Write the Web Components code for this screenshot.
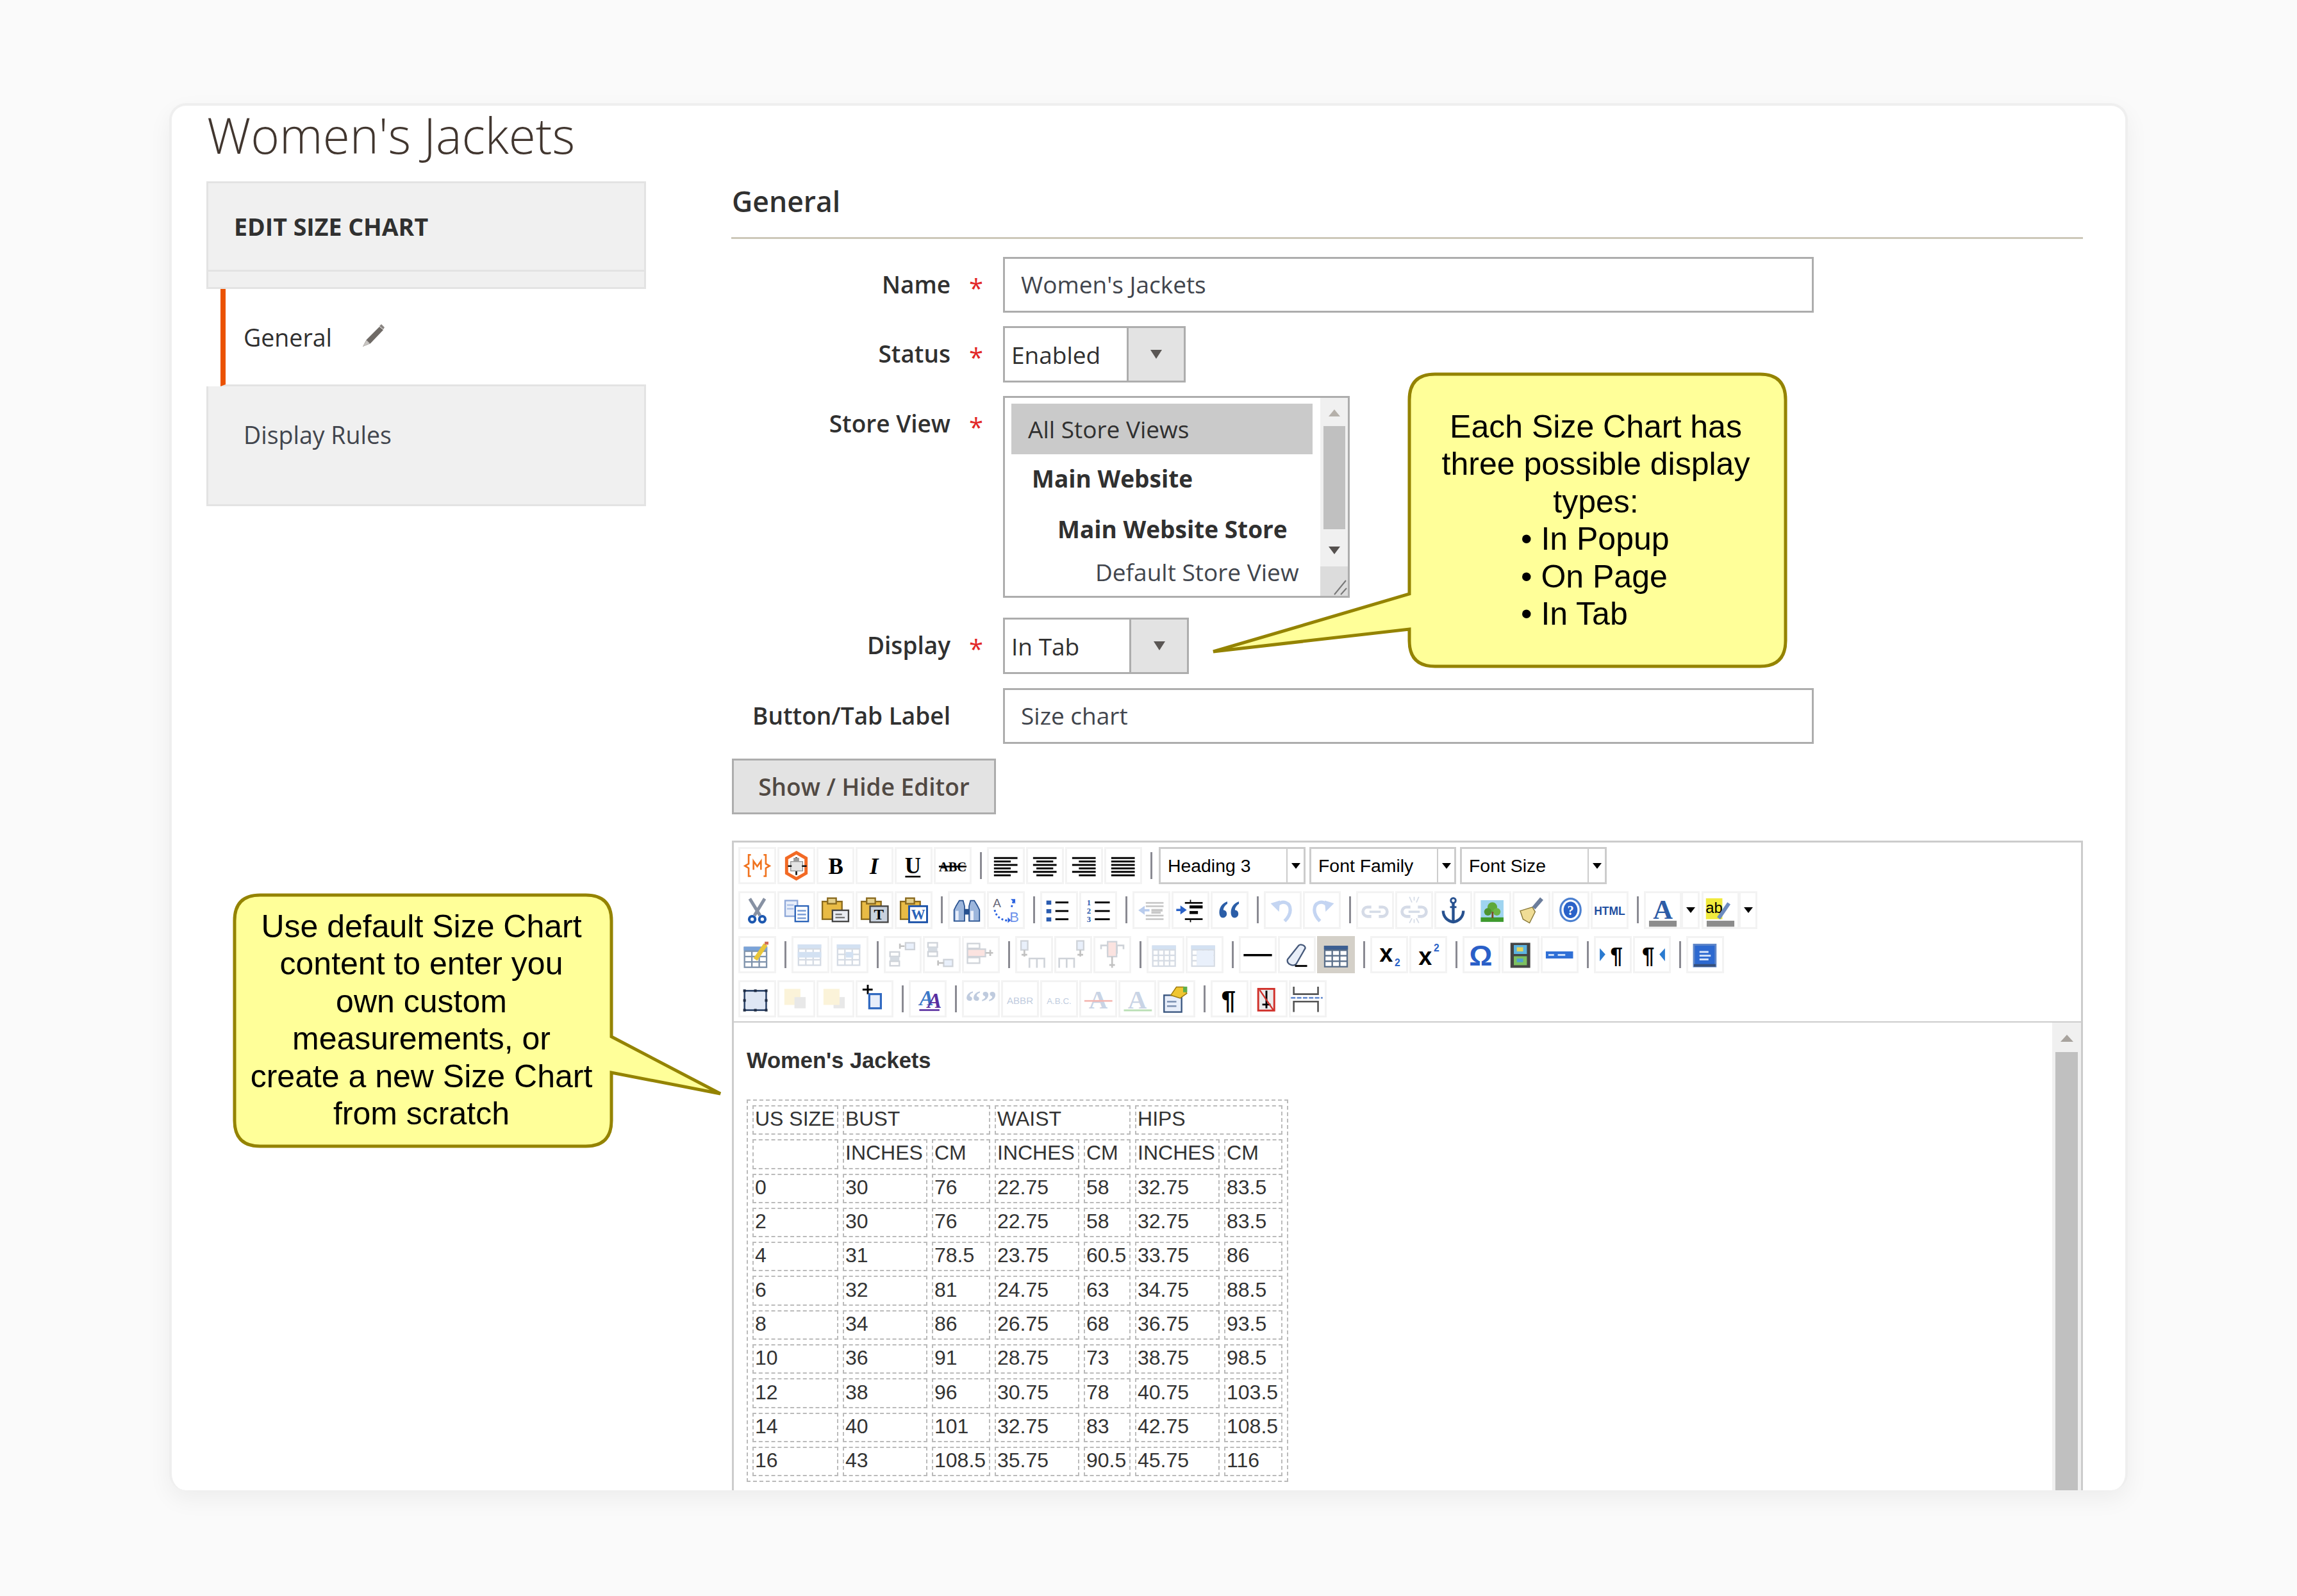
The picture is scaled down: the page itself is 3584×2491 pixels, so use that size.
<!DOCTYPE html>
<html lang="en">
<head>
<meta charset="utf-8">
<title>Women's Jackets</title>
<style>
  html, body { margin: 0; height: 2491px; overflow: hidden; background: #fafafa; }
  body { font-family: "Open Sans", sans-serif; color: #303030; }
</style>
</head>
<body>
<size-chart-card>
  <h1-title slot="title">Women's Jackets</h1-title>
  <side-nav slot="side"></side-nav>
  <form-section slot="main" title="General">
    <form-row label="Name" required><text-field>Women's Jackets</text-field></form-row>
    <form-row label="Status" required style="--gap:21px"><drop-select width="285" split="193">Enabled</drop-select></form-row>
    <form-row label="Store View" required style="--gap:21px"><store-list></store-list></form-row>
    <form-row label="Display" required style="--gap:31px"><drop-select width="290" split="197">In Tab</drop-select></form-row>
    <form-row label="Button/Tab Label" style="--gap:22px"><text-field>Size chart</text-field></form-row>
    <plain-button>Show / Hide Editor</plain-button>
    <wysiwyg-editor></wysiwyg-editor>
  </form-section>
  <call-out x="2199" y="584" w="587" h="456" side="left" t1="927" t2="982" tx="1893" ty="1017" pad="53">Each Size Chart has<br>three possible display<br>types:<div style="text-align:left;padding-left:174px">• In Popup<br>• On Page<br>• In Tab</div></call-out>
  <call-out x="366" y="1397" w="588" h="392" side="right" t1="1618" t2="1674" tx="1124" ty="1707" pad="20">Use default Size Chart<br>content to enter you<br>own custom<br>measurements, or<br>create a new Size Chart<br>from scratch</call-out>
</size-chart-card>

<script>
(function (customElements) {
  // small svg helpers for the 20x20 toolbar icons
  const r = (x, y, w, h, f, s, sw) => `<rect x="${x}" y="${y}" width="${w}" height="${h}" fill="${f}"${s ? ` stroke="${s}" stroke-width="${sw || 0.8}"` : ''}/>`;
  const p = (d, s, sw, f) => `<path d="${d}" fill="${f || 'none'}"${s ? ` stroke="${s}" stroke-width="${sw || 1}"` : ''}/>`;
  const t = (txt, x, y, size, f, extra) => `<text x="${x}" y="${y}" font-size="${size}" fill="${f}" text-anchor="middle" ${extra || ''}>${txt}</text>`;
  const serif = 'font-family="Liberation Serif" font-weight="700"';
  const sans = 'font-family="Liberation Sans"';

  const bars = (spec) => spec.map(([x, w], i) => r(x, 5.4 + i * 1.85, w, 1, '#000')).join('');
  const clipboard = r(3, 5.5, 10.5, 9.5, '#e9bb45', '#8a6a1f') + r(5.8, 3.7, 4.6, 3, '#e3cf8a', '#8a6a1f');
  const tgrid = (x, y, w, h, cols, rows, frame, head) => {
    let out = r(x, y, w, h, frame) + r(x, y, w, 2, head);
    const cw = (w - 0.8) / cols, ch = (h - 2.8) / rows;
    for (let c = 0; c < cols; c++) for (let o = 0; o < rows; o++) out += r(x + 0.8 + c * cw, y + 2.8 + o * ch, cw - 0.8, ch - 0.8, '#fff');
    return out;
  };
  const chain = p('M8 8.5H6a2.5 2.5 0 0 0 0 5H8M12 8.5h2a2.5 2.5 0 0 1 0 5H12', '#7f93b5', 1.6) + p('M7 11h6', '#7f93b5', 1.2);
  const aLetter = (f) => t('A', 10, 15, 14, f, serif);

  const ICONS = {
    vars: p('M6.6 4.2H5.4V9L3.4 10.1 5.4 11.3V15.6H6.6M13.4 4.2H14.6V9L16.6 10.1 14.6 11.3V15.6H13.4', '#f0731f', 0.9) + p('M8 12.2V7.6L10 10.4 12 7.6V12.2', '#f0731f', 0.9),
    widget: p('M10 3 15.2 6V14L10 17 4.8 14V6Z', '#f26a25', 1.7) + r(7, 7.8, 6.4, 5, '#e4e4e4', '#888', 0.4) + p('M10 5.5V7.5M10 13V15M5.5 10.2H7.5M13 10.2H15.5', '#111', 0.9) + r(8.5, 5.8, 3, 2, '#999'),
    bold: t('B', 10.2, 14.4, 12, '#000', serif),
    italic: t('I', 9.8, 14.4, 12, '#000', serif + ' font-style="italic"'),
    underline: t('U', 9.6, 14.2, 12, '#000', serif) + r(5.5, 15.4, 8.2, 0.9, '#000'),
    strike: t('ABC', 10, 13.2, 7, '#000', serif) + r(2.6, 10, 14.8, 0.9, '#000'),
    left: bars([[3.6, 12.6], [3.6, 9], [3.6, 12.6], [3.6, 9], [3.6, 12.6], [3.6, 9]]),
    center: bars([[3.6, 12.6], [5.4, 9], [3.6, 12.6], [5.4, 9], [3.6, 12.6], [5.4, 9]]),
    right: bars([[3.6, 12.6], [7.2, 9], [3.6, 12.6], [7.2, 9], [3.6, 12.6], [7.2, 9]]),
    justify: bars([[3.6, 12.6], [3.6, 12.6], [3.6, 12.6], [3.6, 12.6], [3.6, 12.6], [3.6, 12.6]]),
    cut: p('M6 4 11.5 13M14 4 8.5 13', '#8791a3', 1.7) + `<circle cx="7.3" cy="15" r="1.6" fill="none" stroke="#1d58b0" stroke-width="1.4"/><circle cx="12.7" cy="15" r="1.6" fill="none" stroke="#1d58b0" stroke-width="1.4"/>`,
    copy: r(4, 5, 6.6, 8.4, '#e8eefa', '#8fa8d8') + r(9.4, 7.9, 7, 8.3, '#fff', '#2a62b8') + r(10.6, 10, 4.6, 0.9, '#7ea0d8') + r(10.6, 12, 4.6, 0.9, '#7ea0d8') + r(10.6, 14, 4.6, 0.9, '#7ea0d8') + r(5, 7, 3.6, 0.8, '#a9bfe6') + r(5, 9, 3.6, 0.8, '#a9bfe6'),
    paste: clipboard + r(8.4, 10.2, 8.6, 6, '#e9ecf2', '#444') + r(10, 12, 3.5, 0.8, '#777') + r(10, 13.7, 5, 0.8, '#777'),
    pastetext: clipboard + r(7.6, 8, 9.6, 8.6, '#c9d2de', '#444') + t('T', 12.3, 15, 8, '#000', serif),
    pasteword: clipboard + r(7.6, 8, 9.6, 8.6, '#fff', '#1b52a8', 1) + t('W', 12.4, 15, 7.6, '#2a62b8', serif),
    find: p('M4.2 8 6 5H8L8.8 8V16H3.2V10ZM15.8 8 14 5H12L11.2 8V16H16.8V10Z', '#27518f', 0.6, '#9cb6dc') + r(8.6, 9.5, 2.8, 3, '#27518f') + r(4, 10.5, 1.6, 5, '#e8eefa') + r(12, 10.5, 1.6, 5, '#e8eefa'),
    replace: t('A', 5.2, 8.6, 6.5, '#667', sans) + t('B', 14.5, 16.4, 7.5, '#6c92ea', sans) + p('M14 5.5 13 8.5M4 10c.5 3 3 5.5 7 5.7', '#2a62e0', 1, 'none').replace('<path', '<path stroke-dasharray="1 1.1"') + p('M12.6 4.2h2.4v2.6Z', null, 0, '#2a62e0') + p('M11 14v3l1.7-1.5Z', null, 0, '#2a62e0'),
    bullist: [6, 10.6, 15].map(y => r(3.2, y - 1, 2.6, 2.2, '#2a5cb0') + r(8, y - 0.5, 7, 1, '#000')).join(''),
    numlist: [6, 10.6, 15].map((y, i) => t(String(i + 1), 5, y + 1.4, 4.4, '#2a5cb0', serif) + r(8.2, y - 0.5, 8, 1, '#000')).join(''),
    outdent: [5.8, 7.6, 12.6, 14.5].map(y => r(7, y, 9.5, 0.9, '#555')).join('') + r(10, 9.5, 6, 1.4, '#555') + p('M3 10.2 6.4 7.8V9.6H9V10.8H6.4V12.6Z', null, 0, '#2a62c8') + r(10, 11, 5, 1, '#555'),
    indent: [5.8, 14.5].map(y => r(7, y, 9.5, 0.9, '#000')).join('') + r(9.5, 7.6, 7, 1.6, '#000') + r(9.5, 10.6, 4.5, 1.6, '#000') + p('M8 10 4.6 7.6V9.4H2.4V10.6H4.6V12.4Z', null, 0, '#2a62c8') + r(9.7, 4.6, .6, 1.2, '#000') + r(9.7, 15.4, .6, 1.2, '#000'),
    quote: p('M8.8 5.5C6 6.6 4.6 8.5 4.5 11.2c0 2 .8 3 2 3s2-.9 2-2.1-.7-2-1.8-2c0-1.3.9-2.6 2.1-3.3ZM15 5.5c-2.8 1.1-4.2 3-4.3 5.7 0 2 .8 3 2 3s2-.9 2-2.1-.7-2-1.8-2c0-1.3.9-2.6 2.1-3.3Z', null, 0, '#2b5ea8'),
    undo: p('M7 7.5c3-3 7-1.5 7 2.5 0 2.5-1.5 4.5-3 6', '#4a7fd8', 1.8) + p('M3.5 6.5 8.5 5 8 11Z', null, 0, '#4a7fd8'),
    redo: p('M13 7.5c-3-3-7-1.5-7 2.5 0 2.5 1.5 4.5 3 6', '#4a7fd8', 1.8) + p('M16.5 6.5 11.5 5 12 11Z', null, 0, '#4a7fd8'),
    link: chain,
    unlink: chain + p('M7.5 3 8.8 6M12.5 3 11.2 6M7.5 17 8.8 14.5M12.5 17 11.2 14.5M10 3v2M10 15v2', '#7f93b5', 0.6),
    anchor: `<circle cx="10" cy="5" r="1.3" fill="none" stroke="#27518f"/>` + p('M10 6.3V16.5M4.6 10.5c0 3.5 2.5 5.5 5.4 6 2.9-.5 5.4-2.5 5.4-6', '#27518f', 1.5) + r(8.3, 8, 3.4, 1, '#27518f'),
    image: r(3.8, 4.8, 12.2, 11.6, '#9fd4f0') + r(3.8, 14, 12.2, 2.4, '#3f9a2c') + `<circle cx="10" cy="8.5" r="2.6" fill="#5ea83a"/><circle cx="7.6" cy="11" r="2" fill="#4d9430"/><circle cx="12.4" cy="11" r="2" fill="#6cb544"/>` + r(9.6, 11, 1, 3.4, '#7a4a22'),
    cleanup: p('M4 10.5 10.5 8.5 12 11 9 17 5.5 15Z', '#8a7a3a', 0.5, '#f0dd96') + p('M11.2 9 15.5 4', '#6b7d9c', 2.2),
    help: `<ellipse cx="10" cy="10" rx="5.4" ry="6" fill="#fff" stroke="#4c80d0" stroke-width="1.1"/><ellipse cx="10" cy="10" rx="3.7" ry="4.4" fill="#2a62c8"/>` + t('?', 10, 12.6, 7, '#fff', serif),
    html: t('HTML', 10, 12.6, 6, '#1f4fa0', sans + ' font-weight="700"'),
    fore: t('A', 10, 14.6, 14.6, '#2d5ca6', serif) + r(2.6, 15.8, 14.8, 3.2, '#8c8c8c'),
    back: r(2.2, 3.8, 8.8, 11.2, '#f0ea3c') + t('ab', 6.6, 11.5, 8.2, '#000', sans) + p('M9 14.5 14.5 6.5', '#6c8bc0', 2) + r(2.6, 15.8, 14.8, 3.2, '#8c8c8c'),
    table: tgrid(2.8, 5.7, 12.6, 11.4, 3, 3, '#7f93ac', '#7aa3d8') + p('M9 12.5 14.5 4.5', '#e8c53a', 2.4) + r(14, 3, 2, 1.6, '#d06a55'),
    rowprops: tgrid(3.2, 4.5, 12.6, 11.5, 3, 3, '#7f93ac', '#7aa3d8') + r(3.2, 8.5, 12.6, 3, '#7aa3d8'),
    cellprops: tgrid(3.2, 4.5, 12.6, 11.5, 3, 3, '#7f93ac', '#7aa3d8') + r(8, 8.5, 4, 3, '#7aa3d8'),
    rowbefore: r(3.2, 8.5, 5, 2.4, '#fff', '#6d7a8c') + r(3.2, 11, 5, 2.4, '#8090a8') + r(3.2, 13.5, 5, 2.4, '#fff', '#6d7a8c') + r(11.5, 3.6, 4.8, 3.6, '#bcd3f5', '#6d7a8c') + p('M8.5 5.4H11M8.5 4v2.8', '#444', 0.9),
    rowafter: r(2.6, 3.6, 5, 2.4, '#fff', '#6d7a8c') + r(2.6, 6, 5, 2.4, '#8090a8') + r(2.6, 8.4, 5, 2.4, '#fff', '#6d7a8c') + r(11, 12.6, 4.8, 3.6, '#bcd3f5', '#6d7a8c') + p('M8 14.4h3M8 13v2.8', '#444', 0.9),
    rowdel: r(2.8, 4, 6.5, 2.6, '#fff', '#6d7a8c') + r(2.8, 7, 9.6, 4, '#f4a9a0', '#6d7a8c') + r(2.8, 11.5, 6.5, 3, '#fff', '#6d7a8c') + p('M12.5 9h4M15 7.4V10.6', '#444', 0.9),
    colbefore: r(3, 2.6, 3.6, 4.8, '#bcd3f5', '#6d7a8c') + p('M4.8 7.5V11M3.3 10h3', '#444', 0.9) + p('M7.5 17V12H15.5V17M11.5 12V17', '#6d7a8c', 0.9),
    colafter: r(12, 2.6, 3.6, 4.8, '#bcd3f5', '#6d7a8c') + p('M13.8 7.5V11M12.3 10h3', '#444', 0.9) + p('M2.5 17V12H10.5V17M6.5 12V17', '#6d7a8c', 0.9),
    coldel: p('M4 7V5H7.5V9H12.5V5H16V7', '#6d7a8c', 0.9) + r(7.5, 3, 4.8, 8, '#f4a9a0', '#6d7a8c') + p('M9.9 11V17M8.4 15.5h3', '#444', 0.9),
    split: tgrid(2.8, 5, 12.8, 11.5, 4, 3, '#7f93ac', '#7aa3d8'),
    merge: tgrid(2.8, 5, 12.8, 11.5, 4, 3, '#7f93ac', '#7aa3d8') + r(5.8, 7.8, 9, 8, '#bcd3f5'),
    hr: r(2.4, 9.6, 15.2, 1.2, '#000'),
    eraser: p('M5 12.5 11 5C12 4 14.5 5 14.5 6.5L9.6 15C8 16.5 4.4 15 5 12.5Z', '#46597a', 0.8, '#e8eef8') + r(9, 15.5, 6.5, 1, '#000'),
    visual: tgrid(3.6, 5.2, 12.8, 11.6, 3, 3, '#5a6f8a', '#3c5f92'),
    sub: t('x', 8.4, 13.6, 13, '#000', sans + ' font-weight="700"') + t('2', 14.4, 16, 5.4, '#2a62c8', sans + ' font-weight="700"'),
    sup: t('x', 8.4, 15.6, 13, '#000', sans + ' font-weight="700"') + t('2', 14.4, 8.4, 5.4, '#2a62c8', sans + ' font-weight="700"'),
    omega: t('Ω', 9.6, 15.8, 15.5, '#2a5fc8', sans + ' font-weight="700"'),
    media: r(4.6, 3.6, 10.6, 13.4, '#444') + r(6.4, 4.8, 7, 4.8, '#5db4e0') + r(6.4, 10.8, 7, 4.8, '#7cc060') + r(8, 6, 3.4, 2.2, '#e4d45a') + r(8, 12, 3.4, 2, '#4f9fd0'),
    advhr: r(2.6, 8.2, 14.6, 3.8, '#2f6fd6') + r(4, 9.6, 3, 1, '#cfe0fa') + r(9, 9.6, 4, 1, '#cfe0fa'),
    ltr: p('M3 6.5 6 9.8 3 13.5Z', null, 0, '#2a7ad0') + t('¶', 12, 14.5, 12, '#000', sans + ' font-weight="700"'),
    rtl: t('¶', 8, 14.5, 12, '#000', sans + ' font-weight="700"') + p('M17 6.5 14 9.8 17 13.5Z', null, 0, '#2a7ad0'),
    full: r(4, 4.6, 11.6, 11.6, '#2d69d0', '#5f86c8', 1) + r(7, 8, 4.8, 1, '#d6e4fa') + r(7, 10, 6, 1, '#d6e4fa') + r(7, 12, 4.8, 1, '#d6e4fa') + r(4, 15, 11.6, 1.4, '#37507a'),
    layer: r(3.2, 5.6, 11.6, 10.4, '#dfe7f4') + p('M3.2 5.6h11.6v10.4H3.2Z', '#32486c', 0.9) + [[3.2, 5.6], [9, 5.6], [14.8, 5.6], [3.2, 10.8], [14.8, 10.8], [3.2, 16], [9, 16], [14.8, 16]].map(([x, y]) => r(x - 0.7, y - 0.7, 1.4, 1.4, '#1e2c44')).join(''),
    forward: r(3.6, 4.6, 8.6, 8.6, '#f5dc8c') + r(9, 9, 6, 6, '#bbb'),
    backward: r(9, 9, 6, 6, '#bbb') + r(3.6, 4.6, 8.6, 8.6, '#f5dc8c'),
    absolute: p('M6.4 2.4V7.5M3.6 5H9', '#000', 1) + r(7.2, 7.4, 6.2, 7.6, '#e8eefa', '#2f68c0', 1.1),
    styleprops: t('<tspan fill="#3a78c8">A</tspan><tspan fill="#5a2ea0" dy="1.2">A</tspan>', 9.8, 13.4, 11.5, '#3a78c8', serif + ' font-style="italic" letter-spacing="-3.4"') + r(5.5, 15.5, 10.8, 0.9, '#5a2ea0'),
    cite: t('“”', 10, 17, 17, '#3a5f9c', serif),
    abbr: t('ABBR', 10, 12.6, 5.2, '#3a5f9c', sans),
    acronym: t('A.B.C.', 10, 12.6, 4.6, '#3a5f9c', sans),
    del: aLetter('#5a7cb0') + r(2.6, 10.6, 15, 0.9, '#e02010'),
    ins: aLetter('#5a7cb0') + r(2.8, 15.6, 15, 1, '#2ea020'),
    attribs: r(3.4, 8, 9.4, 9, '#e8eefa', '#39557f') + r(5, 11, 5, 0.9, '#8094b4') + r(5, 13.4, 5, 0.9, '#8094b4') + p('M7 8 10 3.6H14L15.6 7 12 9.6Z', '#9c7a10', 0.5, '#f0c630') + r(13.6, 3.4, 2.2, 3, '#5fae4a'),
    visualchars: t('¶', 9.4, 15.6, 14, '#000', sans + ' font-weight="700"'),
    nonbreaking: r(4.4, 4.6, 8.6, 11.6, '#ececec', '#d0302a', 1) + p('M6.6 13H11M8.8 5.6V15', '#000', 1) + p('M5.2 5.2 12.4 15.8', '#d0302a', 0.8),
    pagebreak: p('M2.5 3.4V7.4H15.5V3.4M2.5 17V11.4H15.5V17', '#555', 0.9) + p('M1 9.4H18', '#6b8fd0', 1).replace('<path', '<path stroke-dasharray="2.4 .8"')
  };

  const base = `*{box-sizing:border-box}`;

  // page-level card, the two columns are plain flex
  class SizeChartCard extends HTMLElement {
    constructor() {
      super();
      this.attachShadow({ mode: 'open' }).innerHTML = `<style>${base}
        :host{display:block;position:relative;box-sizing:border-box;width:3056px;height:2165px;margin:161px 0 0 264px;
          background:#fff;border:4px solid #efefef;border-bottom:0;border-radius:26px;overflow:hidden;
          box-shadow:0 14px 36px rgba(0,0,0,.055)}
        .title{padding:0 0 0 55px;height:118px}
        .cols{display:flex;padding-left:54px}
        .side{width:686px;flex:none}
        .main{width:2109px;margin-left:133px;flex:none}
      </style>
      <div class="title"><slot name="title"></slot></div>
      <div class="cols"><div class="side"><slot name="side"></slot></div><div class="main"><slot name="main"></slot></div></div>
      <slot></slot>`;
    }
  }

  class H1Title extends HTMLElement {
    constructor() {
      super();
      this.attachShadow({ mode: 'open' }).innerHTML = `<style>:host{display:block;font:300 76.5px/90px "Open Sans",sans-serif;color:#41362f}</style><slot></slot>`;
    }
  }

  class SideNav extends HTMLElement {
    constructor() {
      super();
      this.attachShadow({ mode: 'open' }).innerHTML = `<style>${base}
        :host{display:block;font:400 37.5px "Open Sans",sans-serif;color:#303030}
        .head{height:141px;background:#f0f0f0;border:3px solid #e3e3e3;display:flex;align-items:center;padding-left:40px;font-weight:700;color:#303030;font-size:37.5px}
        .strip{height:27px;background:#f0f0f0;border:solid #e3e3e3;border-width:0 3px 3px 3px}
        .on{height:152px;margin-left:22px;border-left:8px solid #eb5202;border-bottom:3px solid #e3e3e3;display:flex;align-items:center;padding-left:28px;gap:42px;background:#fff}
        .on span{margin-top:1px}
        .rest{height:187px;background:#f0f0f0;border:solid #e3e3e3;border-width:0 3px 3px 3px;padding:50px 0 0 55px;color:#41454d}
        svg{width:38px;height:40px;margin:-2px 0 0 3px}
      </style>
      <div class="head">EDIT SIZE CHART</div>
      <div class="strip"></div>
      <div class="on"><span>General</span>
        <svg viewBox="0 0 38 40"><path d="M3 36 9 25 29 5 35 10 15 31Z" fill="#6f6a66"/><path d="M3 36 9 26 14 31Z" fill="#c9c6c3"/><path d="M29 4 32 1 37 6 35 9Z" fill="#8a8582"/></svg></div>
      <div class="rest">Display Rules</div>`;
    }
  }

  class FormSection extends HTMLElement {
    constructor() {
      super();
      this.attachShadow({ mode: 'open' }).innerHTML = `<style>${base}
        :host{display:block}
        h2{margin:0;height:90px;padding:3px 0 0 1px;border-bottom:3px solid #cdc8b9;font:600 44.5px/56px "Open Sans",sans-serif;color:#303030}
        .body{padding-top:28px}
      </style><h2></h2><div class="body"><slot></slot></div>`;
      this.shadowRoot.querySelector('h2').textContent = this.getAttribute('title');
      this.removeAttribute('title');
    }
  }

  class FormRow extends HTMLElement {
    constructor() {
      super();
      this.attachShadow({ mode: 'open' }).innerHTML = `<style>${base}
        :host{display:flex;align-items:flex-start;margin-top:var(--gap,0);font:600 37px "Open Sans",sans-serif;color:#303030}
        .label{width:342px;text-align:right;line-height:86px;flex:none;white-space:nowrap}
        .star{width:82px;height:86px;flex:none;padding:6px 0 0 29px;color:#e22626;font-size:40px;line-height:86px;font-weight:400}
      </style><div class="label"></div><div class="star"></div><slot></slot>`;
      this.shadowRoot.querySelector('.label').textContent = this.getAttribute('label');
      if (this.hasAttribute('required')) this.shadowRoot.querySelector('.star').textContent = '*';
    }
  }

  class TextField extends HTMLElement {
    constructor() {
      super();
      this.attachShadow({ mode: 'open' }).innerHTML = `<style>
        :host{display:flex;align-items:center;box-sizing:border-box;width:1265px;height:87px;border:3px solid #adadad;padding:0 0 2px 25px;
          background:#fff;font:400 37px "Open Sans",sans-serif;color:#41454d}
      </style><slot></slot>`;
    }
  }

  class DropSelect extends HTMLElement {
    constructor() {
      super();
      const split = this.getAttribute('split');
      this.attachShadow({ mode: 'open' }).innerHTML = `<style>${base}
        :host{display:flex;box-sizing:border-box;width:${this.getAttribute('width')}px;height:88px;border:3px solid #adadad;background:#fff;
          font:400 37px "Open Sans",sans-serif;color:#303030}
        .v{width:${split - 3}px;padding-left:10px;display:flex;align-items:center}
        .a{flex:1;background:#e3e3e3;border-left:3px solid #adadad;display:flex;align-items:center;justify-content:center}
        .a i{width:0;height:0;border:solid transparent;border-width:14px 9px 0;border-top-color:#5a5654}
      </style><div class="v"><slot></slot></div><div class="a"><i></i></div>`;
    }
  }

  class StoreList extends HTMLElement {
    constructor() {
      super();
      this.attachShadow({ mode: 'open' }).innerHTML = `<style>${base}
        :host{display:flex;box-sizing:border-box;width:541px;height:315px;border:3px solid #adadad;background:#fff;
          font:400 37px "Open Sans",sans-serif;color:#303030}
        .list{width:492px;padding:9px 0 0 10px}
        .o{display:flex;align-items:center;width:470px;white-space:nowrap}
        .sel{height:78.5px;background:#cacaca;padding-left:26px}
        .b{font-weight:700}
        .bar{width:43px;background:#f0f0f0;position:relative;display:flex;flex-direction:column;align-items:center}
        .up,.dn{width:0;height:0;border:solid transparent;border-width:0 9px 11px}
        .up{border-bottom-color:#b5b0aa;margin-top:18px}
        .dn{border-width:12px 9px 0;border-top-color:#55514f;margin-top:27px}
        .th{width:34px;height:161px;background:#c0c0c0;margin-top:15px}
        .corner{margin-top:auto;width:100%;height:46px;background:#dcdcdc;display:block}
      </style>
      <div class="list">
        <div class="o sel">All Store Views</div>
        <div class="o b" style="height:76px;padding-left:32px">Main Website</div>
        <div class="o b" style="height:82px;padding-left:72px">Main Website Store</div>
        <div class="o" style="height:52px;padding-left:131px;color:#41454d">Default Store View</div>
      </div>
      <div class="bar"><i class="up"></i><i class="th"></i><i class="dn"></i>
        <svg class="corner" viewBox="0 0 43 46"><path d="M22 44 40 22M32 44 41 34" stroke="#777" stroke-width="2" fill="none"/></svg></div>`;
    }
  }

  class PlainButton extends HTMLElement {
    constructor() {
      super();
      this.attachShadow({ mode: 'open' }).innerHTML = `<style>
        :host{display:flex;align-items:center;justify-content:center;box-sizing:border-box;width:412px;height:87px;margin:23px 0 41px 1px;
          background:#e3e3e3;border:3px solid #adadad;font:600 37px "Open Sans",sans-serif;color:#514943}
      </style><slot></slot>`;
    }
  }

  class TbButton extends HTMLElement {
    constructor() {
      super();
      const name = this.getAttribute('icon');
      const off = this.hasAttribute('off');
      const on = this.hasAttribute('on');
      this.attachShadow({ mode: 'open' }).innerHTML = `<style>
        :host{display:block;position:relative;width:59px;height:58.3px;margin-right:2px;flex:none;background:${on ? '#d4d0c8' : '#fff'}}
        svg{display:block;width:100%;height:100%;${off ? 'opacity:.32;' : ''}}
        :host::after{content:"";position:absolute;inset:0;border:3px solid ${on ? '#d4d0c8' : '#f3f3f3'}}
      </style><svg viewBox="0 0 20 20">${ICONS[name]}</svg>`;
    }
  }

  class TbArrow extends HTMLElement {
    constructor() {
      super();
      this.attachShadow({ mode: 'open' }).innerHTML = `<style>
        :host{display:flex;align-items:center;justify-content:center;width:28px;height:58.3px;margin:0 3px 0 -2px;flex:none;border:3px solid #f3f3f3;border-left-width:2px;box-sizing:border-box}
        i{width:0;height:0;border:solid transparent;border-width:9px 7px 0;border-top-color:#000}
      </style><i></i>`;
    }
  }

  class TbSep extends HTMLElement {
    constructor() {
      super();
      this.attachShadow({ mode: 'open' }).innerHTML = `<style>
        :host{display:flex;align-items:center;justify-content:center;width:22px;height:58.3px;flex:none;padding-left:2px;box-sizing:border-box}
        i{width:3px;height:42px;background:#8a8a92}
      </style><i></i>`;
    }
  }

  class TbList extends HTMLElement {
    constructor() {
      super();
      this.attachShadow({ mode: 'open' }).innerHTML = `<style>${base}
        :host{display:flex;box-sizing:border-box;width:229px;height:58.3px;margin-right:6px;flex:none;border:3px solid #ccc;
          font:400 28.4px "Liberation Sans",sans-serif;color:#000}
        .v{width:198px;padding-left:11px;display:flex;align-items:center;white-space:nowrap;border-right:2px solid #ccc}
        .a{flex:1;display:flex;align-items:center;justify-content:center}
        i{width:0;height:0;border:solid transparent;border-width:9px 7px 0;border-top-color:#000}
      </style><div class="v"><slot></slot></div><div class="a"><i></i></div>`;
    }
  }

  class WysiwygToolbar extends HTMLElement {
    constructor() {
      super();
      const rows = [
        'vars widget bold italic underline strike | left center right justify | [Heading 3] [Font Family] [Font Size]',
        'cut copy paste pastetext pasteword | find replace | bullist numlist | outdent! indent quote | undo! redo! | link! unlink! anchor image cleanup help html | fore ^ back ^',
        'table | rowprops! cellprops! | rowbefore! rowafter! rowdel! | colbefore! colafter! coldel! | split! merge! | hr eraser visual* | sub sup | omega media advhr | ltr rtl | full',
        'layer forward! backward! absolute | styleprops | cite! abbr! acronym! del! ins! attribs | visualchars nonbreaking pagebreak'
      ];
      const html = rows.map(row => {
        const cells = row.match(/\[[^\]]+\]|\S+/g).map(tok => {
          if (tok === '|') return '<tb-sep></tb-sep>';
          if (tok === '^') return '<tb-arrow></tb-arrow>';
          if (tok[0] === '[') return `<tb-list>${tok.slice(1, -1)}</tb-list>`;
          const off = tok.endsWith('!'), on = tok.endsWith('*');
          return `<tb-button icon="${tok.replace(/[!*]$/, '')}"${off ? ' off' : ''}${on ? ' on' : ''}></tb-button>`;
        }).join('');
        return `<div class="row">${cells}</div>`;
      }).join('');
      this.attachShadow({ mode: 'open' }).innerHTML = `<style>${base}
        :host{display:block;height:281px;padding:7px 0 0 7px;border-bottom:2px solid #ccc}
        .row{display:flex;margin-bottom:11px}
        .row tb-list:first-of-type{margin-left:2px}
      </style>${html}`;
    }
  }

  class SizeTable extends HTMLElement {
    constructor() {
      super();
      const data = [
        ['0', '30', '76', '22.75', '58', '32.75', '83.5'],
        ['2', '30', '76', '22.75', '58', '32.75', '83.5'],
        ['4', '31', '78.5', '23.75', '60.5', '33.75', '86'],
        ['6', '32', '81', '24.75', '63', '34.75', '88.5'],
        ['8', '34', '86', '26.75', '68', '36.75', '93.5'],
        ['10', '36', '91', '28.75', '73', '38.75', '98.5'],
        ['12', '38', '96', '30.75', '78', '40.75', '103.5'],
        ['14', '40', '101', '32.75', '83', '42.75', '108.5'],
        ['16', '43', '108.5', '35.75', '90.5', '45.75', '116']
      ];
      const body = data.map(row => `<tr>${row.map(c => `<td>${c}</td>`).join('')}</tr>`).join('');
      this.attachShadow({ mode: 'open' }).innerHTML = `<style>${base}
        :host{display:block;font:400 32px "Liberation Sans",sans-serif;color:#333}
        table{border:2px dashed #bbb;border-spacing:7px;border-collapse:separate;table-layout:fixed;width:845px}
        td{border:2px dashed #bbb;height:46.3px;padding:0 0 3px 2px;white-space:nowrap;overflow:visible}
      </style>
      <table>
        <colgroup><col style="width:134px"><col style="width:132px"><col style="width:91px"><col style="width:132px"><col style="width:73px"><col style="width:132px"><col style="width:91px"></colgroup>
        <tr><td>US SIZE</td><td colspan="2">BUST</td><td colspan="2">WAIST</td><td colspan="2">HIPS</td></tr>
        <tr><td></td><td>INCHES</td><td>CM</td><td>INCHES</td><td>CM</td><td>INCHES</td><td>CM</td></tr>
        ${body}
      </table>`;
    }
  }

  class WysiwygEditor extends HTMLElement {
    constructor() {
      super();
      this.attachShadow({ mode: 'open' }).innerHTML = `<style>${base}
        :host{display:block;box-sizing:border-box;width:2108px;margin-left:1px;border:solid #ccc;border-width:3px 3px 0;background:#fff}
        .body{display:flex;height:760px}
        .doc{flex:1;padding:36px 0 0 20px}
        h3{margin:0 0 38px;font:700 34.5px/46px "Liberation Sans",sans-serif;color:#303030}
        .track{width:45px;background:#f0f0f0;display:flex;flex-direction:column;align-items:center}
        .track i{width:0;height:0;border:solid transparent;border-width:0 10px 11px;border-bottom-color:#a8a39e;margin-top:19px}
        .track b{width:35px;flex:1;background:#c0c0c0;margin-top:16px}
      </style>
      <wysiwyg-toolbar></wysiwyg-toolbar>
      <div class="body">
        <div class="doc"><h3>Women's Jackets</h3><size-table></size-table></div>
        <div class="track"><i></i><b></b></div>
      </div>`;
    }
  }

  // yellow annotation bubble, laid over the form on purpose
  class CallOut extends HTMLElement {
    constructor() {
      super();
      const n = k => +this.getAttribute(k);
      const [x, y, w, h] = [n('x'), n('y'), n('w'), n('h')];
      const rad = 40, right = this.getAttribute('side') === 'right';
      const t1 = n('t1') - y, t2 = n('t2') - y, tx = n('tx') - x, ty = n('ty') - y;
      const d = `M${rad} 0H${w - rad}Q${w} 0 ${w} ${rad}` +
        (right ? `V${t1}L${tx} ${ty} ${w} ${t2}` : '') +
        `V${h - rad}Q${w} ${h} ${w - rad} ${h}H${rad}Q0 ${h} 0 ${h - rad}` +
        (right ? '' : `V${t2}L${tx} ${ty} 0 ${t1}`) +
        `V${rad}Q0 0 ${rad} 0Z`;
      this.style.left = (x - 268) + 'px';
      this.style.top = (y - 165) + 'px';
      this.style.width = w + 'px';
      this.style.height = h + 'px';
      this.attachShadow({ mode: 'open' }).innerHTML = `<style>${base}
        :host{display:block;position:absolute;font:400 50px/58.4px "Liberation Sans",sans-serif;color:#000;text-align:center}
        svg{position:absolute;left:0;top:0;overflow:visible}
        .txt{position:relative;padding:${n('pad')}px 5px 0 0;white-space:nowrap}
      </style>
      <svg width="${w}" height="${h}"><path d="${d}" fill="#ffff99" stroke="#948300" stroke-width="5" stroke-linejoin="miter"/></svg>
      <div class="txt"><slot></slot></div>`;
    }
  }

  customElements.define('tb-button', TbButton);
  customElements.define('tb-arrow', TbArrow);
  customElements.define('tb-sep', TbSep);
  customElements.define('tb-list', TbList);
  customElements.define('wysiwyg-toolbar', WysiwygToolbar);
  customElements.define('size-table', SizeTable);
  customElements.define('wysiwyg-editor', WysiwygEditor);
  customElements.define('text-field', TextField);
  customElements.define('drop-select', DropSelect);
  customElements.define('store-list', StoreList);
  customElements.define('plain-button', PlainButton);
  customElements.define('form-row', FormRow);
  customElements.define('form-section', FormSection);
  customElements.define('side-nav', SideNav);
  customElements.define('h1-title', H1Title);
  customElements.define('call-out', CallOut);
  customElements.define('size-chart-card', SizeChartCard);
})(window.customElements);
</script>
</body>
</html>
